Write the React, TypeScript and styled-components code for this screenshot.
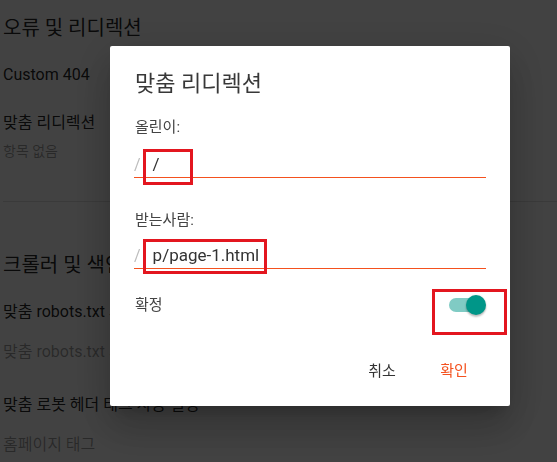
import React from 'react';
import styled, { createGlobalStyle } from 'styled-components';

const accent = '#f4511e';
const highlight = '#e3161f';

const GlobalStyle = createGlobalStyle`
  html, body {
    margin: 0;
    padding: 0;
    background: #ffffff;
  }
  body {
    font-family: Roboto, 'Noto Sans CJK KR', sans-serif;
    color: rgba(0, 0, 0, 0.87);
    overflow: hidden;
  }
`;

const Page = styled.div`
  width: 557px;
  height: 462px;
  padding-left: 3px;
  box-sizing: border-box;
`;

const Section = styled.section<{ top: number }>`
  padding-top: ${({ top }) => top}px;
`;

const SectionTitle = styled.h2`
  margin: 0 0 22px;
  font-size: 20px;
  line-height: 26px;
  font-weight: 400;
`;

const ItemLabel = styled.div<{ gap?: number }>`
  font-size: 16px;
  line-height: 24px;
  margin-top: ${({ gap }) => gap ?? 0}px;
`;

const ItemHint = styled.div<{ size?: number; gap?: number }>`
  font-size: ${({ size }) => size ?? 16}px;
  line-height: ${({ size }) => (size === 14 ? 20 : 24)}px;
  margin-top: ${({ gap }) => gap ?? 0}px;
  color: rgba(0, 0, 0, 0.38);
`;

const Divider = styled.hr`
  margin: 40px 0 0;
  border: 0;
  border-top: 1px solid #e0e0e0;
`;

const Scrim = styled.div`
  position: fixed;
  inset: 0;
  background: rgba(0, 0, 0, 0.74);
`;

const Dialog = styled.div`
  position: fixed;
  top: 46px;
  left: 110px;
  width: 400px;
  box-sizing: border-box;
  padding: 24px 24px 19px;
  background: #ffffff;
  border-radius: 2px;
  box-shadow: 0 11px 15px -7px rgba(0, 0, 0, 0.2), 0 24px 38px 3px rgba(0, 0, 0, 0.14),
    0 9px 46px 8px rgba(0, 0, 0, 0.12);
  color: #333333;
`;

const DialogTitle = styled.h3`
  margin: 0;
  padding-left: 1px;
  font-size: 22px;
  line-height: 28px;
  font-weight: 400;
  color: #383838;
`;

const FieldLabel = styled.div<{ gap: number }>`
  margin-top: ${({ gap }) => gap}px;
  padding-left: 1px;
  font-size: 15px;
  line-height: 20px;
  color: #444444;
`;

const InputRow = styled.div<{ gap: number }>`
  display: flex;
  align-items: center;
  gap: 12px;
  height: 26px;
  margin-top: ${({ gap }) => gap}px;
  padding-top: 3px;
  border-bottom: 1px solid ${accent};
`;

const Prefix = styled.span`
  font-size: 16px;
  color: #bdbdbd;
`;

const InputText = styled.span`
  font-size: 17px;
  color: #333333;
`;

const ToggleRow = styled.div`
  display: flex;
  justify-content: space-between;
  align-items: center;
  height: 24px;
  margin-top: 24px;
`;

const ToggleLabel = styled.span`
  padding-left: 1px;
  font-size: 15px;
  line-height: 20px;
  color: #444444;
`;

const Switch = styled.div<{ on: boolean }>`
  position: relative;
  width: 37px;
  height: 20px;

  &::before {
    content: '';
    position: absolute;
    left: 0;
    top: 3px;
    width: 34px;
    height: 14px;
    border-radius: 7px;
    background: ${({ on }) => (on ? '#80cbc4' : '#bdbdbd')};
  }

  &::after {
    content: '';
    position: absolute;
    top: 0;
    left: ${({ on }) => (on ? 17 : 0)}px;
    width: 20px;
    height: 20px;
    border-radius: 50%;
    background: ${({ on }) => (on ? '#009688' : '#fafafa')};
    box-shadow: 0 2px 2px rgba(0, 0, 0, 0.24), 0 0 2px rgba(0, 0, 0, 0.12);
  }
`;

const Actions = styled.div`
  display: flex;
  justify-content: flex-end;
  gap: 8px;
  margin-top: 34px;
`;

const Button = styled.button<{ primary?: boolean }>`
  min-width: 64px;
  height: 36px;
  padding: 0 16px;
  border: 0;
  background: transparent;
  font-family: inherit;
  font-size: 15px;
  color: ${({ primary }) => (primary ? accent : '#333333')};
  cursor: pointer;
`;

const Highlight = styled.div<{ x: number; y: number; w: number; h: number }>`
  position: absolute;
  left: ${({ x }) => x}px;
  top: ${({ y }) => y}px;
  width: ${({ w }) => w}px;
  height: ${({ h }) => h}px;
  box-sizing: border-box;
  border: 3px solid ${highlight};
  pointer-events: none;
`;

export default function App() {
  return (
    <>
      <GlobalStyle />
      <Page>
        <Section top={15}>
          <SectionTitle>오류 및 리디렉션</SectionTitle>
          <ItemLabel>Custom 404</ItemLabel>
          <ItemLabel gap={24}>맞춤 리디렉션</ItemLabel>
          <ItemHint size={14} gap={6}>항목 없음</ItemHint>
        </Section>
        <Divider />
        <Section top={50}>
          <SectionTitle>크롤러 및 색인 생성</SectionTitle>
          <ItemLabel gap={5}>맞춤 robots.txt 사용 설정</ItemLabel>
          <ItemHint gap={16}>맞춤 robots.txt 사용 안함</ItemHint>
          <ItemLabel gap={29}>맞춤 로봇 헤더 태그 사용 설정</ItemLabel>
          <ItemHint gap={16}>홈페이지 태그</ItemHint>
        </Section>
      </Page>
      <Scrim />
      <Dialog>
        <DialogTitle>맞춤 리디렉션</DialogTitle>
        <FieldLabel gap={19}>올린이:</FieldLabel>
        <InputRow gap={11}>
          <Prefix>/</Prefix>
          <InputText>/</InputText>
        </InputRow>
        <FieldLabel gap={32}>받는사람:</FieldLabel>
        <InputRow gap={9}>
          <Prefix>/</Prefix>
          <InputText>p/page-1.html</InputText>
        </InputRow>
        <ToggleRow>
          <ToggleLabel>확정</ToggleLabel>
          <Switch on />
        </ToggleRow>
        <Actions>
          <Button>취소</Button>
          <Button primary>확인</Button>
        </Actions>
        <Highlight x={33} y={103} w={50} h={36} />
        <Highlight x={33} y={193} w={124} h={35} />
        <Highlight x={322} y={243} w={75} h={46} />
      </Dialog>
    </>
  );
}
